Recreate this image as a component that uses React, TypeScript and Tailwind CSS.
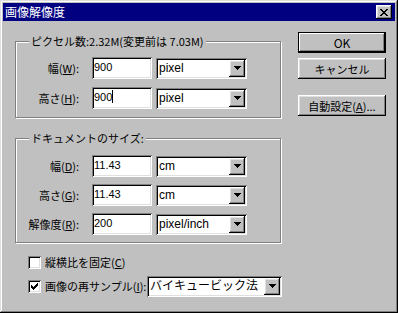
import React from "react";

const jp = "font-['Noto_Sans_CJK_JP',sans-serif]";
const lat = "font-['Liberation_Sans','Noto_Sans_CJK_JP',sans-serif]";
const raised =
  "shadow-[inset_-1px_-1px_#000,inset_1px_1px_#fff,inset_-2px_-2px_#808080,inset_2px_2px_#dfdfdf]";
const sunken =
  "shadow-[inset_1px_1px_#808080,inset_-1px_-1px_#fff,inset_2px_2px_#000,inset_-2px_-2px_#dfdfdf]";

function Arrow() {
  return (
    <svg width="7" height="4" viewBox="0 0 7 4" shapeRendering="crispEdges">
      <rect x="0" y="0" width="7" height="1" fill="#000" />
      <rect x="1" y="1" width="5" height="1" fill="#000" />
      <rect x="2" y="2" width="3" height="1" fill="#000" />
      <rect x="3" y="3" width="1" height="1" fill="#000" />
    </svg>
  );
}

function Combo({ value, width }: { value: string; width: string }) {
  return (
    <div className={`flex h-[21px] shrink-0 bg-white p-[2px] ${width} ${sunken}`}>
      <span className={`flex-1 pl-[1px] text-[12px] leading-[17px] text-black ${lat}`}>{value}</span>
      <div className={`flex h-[17px] w-[16px] items-center justify-center bg-[#c0c0c0] ${raised}`}>
        <Arrow />
      </div>
    </div>
  );
}

function Field({ value, caret }: { value: string; caret?: boolean }) {
  return (
    <div className={`flex h-[22px] w-[60px] shrink-0 items-start bg-white px-[2px] pt-[2px] ${sunken}`}>
      <span className={`text-[11px] leading-[16px] text-black ${lat}`}>{value}</span>
      {caret && <span className="mt-[1px] h-[13px] w-[1px] bg-black" />}
    </div>
  );
}

function Row({ label, k, value, unit, caret }: { label: string; k: string; value: string; unit: string; caret?: boolean }) {
  return (
    <div className="flex h-[22px] items-center">
      <div className="w-[63px] text-right text-[11px] leading-[14px]">
        {label}(<u className="underline-offset-[1px]">{k}</u>):
      </div>
      <div className="ml-[13px] flex items-center gap-[4px]">
        <Field value={value} caret={caret} />
        <Combo value={unit} width="w-[91px]" />
      </div>
    </div>
  );
}

function Group({ title, className, children }: { title: string; className: string; children: React.ReactNode }) {
  return (
    <div className={`relative w-[266px] border border-[#808080] shadow-[inset_1px_1px_#fff,1px_1px_#fff] ${className}`}>
      <span className="absolute -top-[8px] left-[13px] bg-[#c0c0c0] px-[2px] text-[11px] leading-[14px]">{title}</span>
      {children}
    </div>
  );
}

function Check({ on }: { on?: boolean }) {
  return (
    <div className={`h-[13px] w-[13px] shrink-0 bg-white p-[3px] ${sunken}`}>
      {on && (
        <svg width="7" height="7" viewBox="0 0 7 7" shapeRendering="crispEdges">
          <rect x="6" y="0" width="1" height="1" />
          <rect x="5" y="1" width="2" height="1" />
          <rect x="0" y="2" width="1" height="1" />
          <rect x="4" y="2" width="3" height="1" />
          <rect x="0" y="3" width="2" height="1" />
          <rect x="3" y="3" width="3" height="1" />
          <rect x="0" y="4" width="5" height="1" />
          <rect x="1" y="5" width="3" height="1" />
          <rect x="2" y="6" width="1" height="1" />
        </svg>
      )}
    </div>
  );
}

function Button({ children, isDefault, className }: { children: React.ReactNode; isDefault?: boolean; className?: string }) {
  return (
    <button
      className={`flex h-[21px] w-[88px] items-center justify-center bg-[#c0c0c0] text-[11px] leading-[14px] text-black ${
        isDefault
          ? "border border-black shadow-[inset_-1px_-1px_#000,inset_1px_1px_#fff,inset_-2px_-2px_#808080]"
          : raised
      } ${className ?? ""}`}
    >
      {children}
    </button>
  );
}

export default function App() {
  return (
    <div
      className={`h-[313px] w-[398px] bg-[#c0c0c0] p-[3px] text-black ${jp} shadow-[inset_-1px_-1px_#000,inset_1px_1px_#dfdfdf,inset_-2px_-2px_#808080,inset_2px_2px_#fff]`}
    >
      {/* Title bar */}
      <div className="flex h-[18px] items-center justify-between bg-[#000080] pl-[2px] pr-[3px]">
        <span className="text-[12px] leading-[16px] text-white">画像解像度</span>
        <div className={`flex h-[14px] w-[16px] items-center justify-center bg-[#c0c0c0] ${raised}`}>
          <svg width="8" height="7" viewBox="0 0 8 7" shapeRendering="crispEdges">
            <rect x="0" y="0" width="2" height="1" />
            <rect x="6" y="0" width="2" height="1" />
            <rect x="1" y="1" width="2" height="1" />
            <rect x="5" y="1" width="2" height="1" />
            <rect x="2" y="2" width="4" height="1" />
            <rect x="3" y="3" width="2" height="1" />
            <rect x="2" y="4" width="4" height="1" />
            <rect x="1" y="5" width="2" height="1" />
            <rect x="5" y="5" width="2" height="1" />
            <rect x="0" y="6" width="2" height="1" />
            <rect x="6" y="6" width="2" height="1" />
          </svg>
        </div>
      </div>

      <div className="flex">
        {/* Left column */}
        <div className="ml-[12px] flex w-[266px] flex-col">
          <Group title="ピクセル数:2.32M(変更前は 7.03M)" className="mt-[20px] flex flex-col gap-[8px] pb-[8px] pt-[15px]">
            <Row label="幅" k="W" value="900" unit="pixel" />
            <Row label="高さ" k="H" value="900" unit="pixel" caret />
          </Group>

          <Group title="ドキュメントのサイズ:" className="mt-[20px] flex flex-col gap-[7px] pb-[7px] pt-[16px]">
            <Row label="幅" k="D" value="11.43" unit="cm" />
            <Row label="高さ" k="G" value="11.43" unit="cm" />
            <Row label="解像度" k="R" value="200" unit="pixel/inch" />
          </Group>

          <div className="mt-[13px] flex items-center pl-[13px]">
            <Check />
            <span className="ml-[4px] text-[11px] leading-[13px]">
              縦横比を固定(<u className="underline-offset-[1px]">C</u>)
            </span>
          </div>
          <div className="mt-[6px] flex h-[22px] items-center pl-[13px]">
            <Check on />
            <span className="ml-[4px] w-[102px] shrink-0 text-[11px] leading-[13px]">
              画像の再サンプル(<u className="underline-offset-[1px]">I</u>):
            </span>
            <Combo value="バイキュービック法" width="w-[135px]" />
          </div>
        </div>

        {/* Right column */}
        <div className="ml-[17px] mt-[11px] flex flex-col">
          <Button isDefault>
            <span className="text-[12px]">OK</span>
          </Button>
          <Button className="mt-[5px]">キャンセル</Button>
          <Button className="mt-[16px]">
            自動設定(<u className="underline-offset-[1px]">A</u>)...
          </Button>
        </div>
      </div>
    </div>
  );
}
